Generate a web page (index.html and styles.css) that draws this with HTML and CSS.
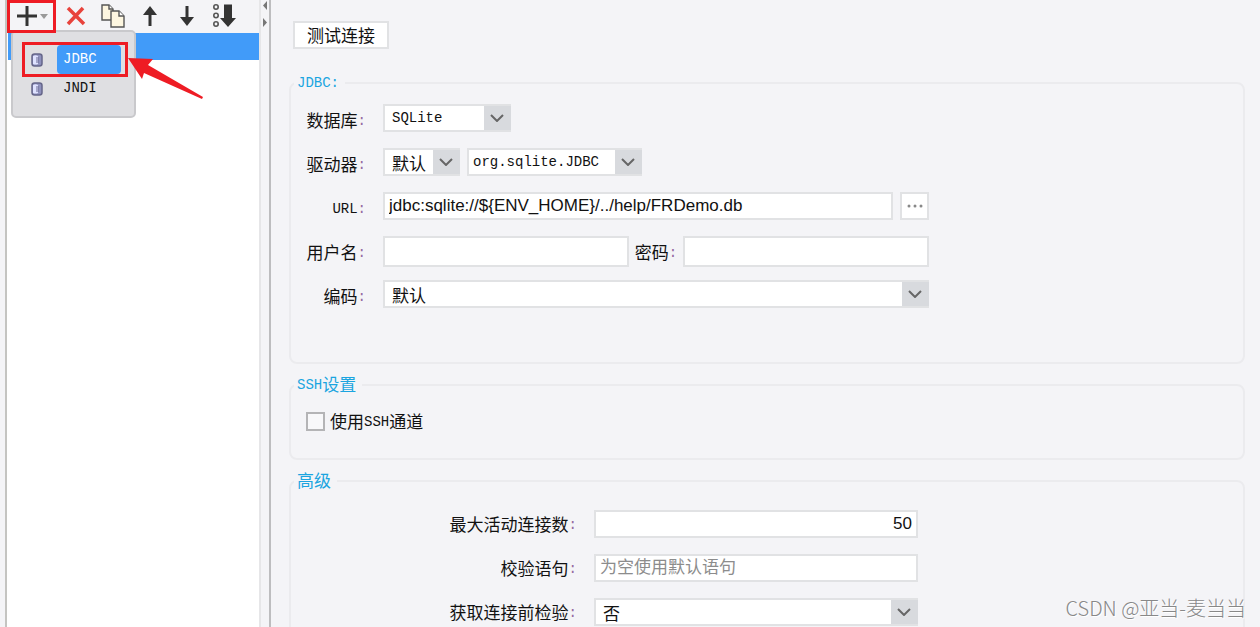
FILE: index.html
```html
<!DOCTYPE html>
<html lang="zh-CN">
<head>
    <meta charset="UTF-8">
    <meta name="viewport" content="width=device-width, initial-scale=1.0">
    <title>定义数据连接</title>
    <link rel="stylesheet" href="styles.css">
</head>

<body>
    <div class="app">
        <aside class="sidebar">
            <div class="toolbar">
                <button class="tool tool-add" type="button" aria-label="新增">
                    <svg width="32" height="20" viewBox="0 0 32 20"><path d="M11 0v20M1 10h20" stroke="#333" stroke-width="3" fill="none"/><path d="M24 8h8l-4 5z" fill="#999"/></svg>
                </button>
                <button class="tool" type="button" aria-label="删除">
                    <svg width="20" height="20" viewBox="0 0 20 20"><path d="M2 2l16 16M17 2L2 18" stroke="#e8433c" stroke-width="3.500" fill="none"/></svg>
                </button>
                <button class="tool" type="button" aria-label="复制">
                    <svg width="24" height="24" viewBox="0 0 24 24" fill="#fdf6e0" stroke="#555" stroke-width="1.400"><path d="M1 1h7l4 4v11H1z"/><path d="M8 1v4h4" fill="#fff"/><path d="M10 7h8l5 5v11H10z"/><path d="M18 7v5h5" fill="#fff"/></svg>
                </button>
                <button class="tool" type="button" aria-label="上移">
                    <svg width="16" height="20" viewBox="0 0 16 20"><path d="M8 20V6" stroke="#333" stroke-width="3"/><path d="M8 0l7 9H1z" fill="#333"/></svg>
                </button>
                <button class="tool" type="button" aria-label="下移">
                    <svg width="16" height="20" viewBox="0 0 16 20"><path d="M8 0v14" stroke="#333" stroke-width="3"/><path d="M8 20l7-9H1z" fill="#333"/></svg>
                </button>
                <button class="tool" type="button" aria-label="排序">
                    <svg width="24" height="24" viewBox="0 0 24 24"><g fill="none" stroke="#555" stroke-width="1.600"><circle cx="4" cy="3" r="2.200"/><circle cx="4" cy="11.500" r="2.200"/><circle cx="4" cy="20" r="2.200"/></g><path d="M12 .5h8V14h4l-8 9-8-9h4z" fill="#333"/></svg>
                </button>
            </div>
            <div class="list">
                <div class="list-row selected"></div>
            </div>

            <div class="menu" role="menu">
                <button class="menu-item" type="button" role="menuitem">
                    <svg width="12" height="14" viewBox="0 0 12 14"><rect x="1" y="1" width="10" height="12" rx="2.500" fill="#8f91bd" stroke="#66668a" stroke-width="1.500"/><path d="M2 3q2.500-1.500 5 0v8q-2.500 1-5 0z" fill="#dfe2ff"/><path d="M5 5h3M5 7h3M5 9h3" stroke="#6c6c96"/></svg>
                    <span class="menu-text active">JDBC</span>
                </button>
                <button class="menu-item" type="button" role="menuitem">
                    <svg width="12" height="14" viewBox="0 0 12 14"><rect x="1" y="1" width="10" height="12" rx="2.500" fill="#8f91bd" stroke="#66668a" stroke-width="1.500"/><path d="M2 3q2.500-1.500 5 0v8q-2.500 1-5 0z" fill="#dfe2ff"/><path d="M5 5h3M5 7h3M5 9h3" stroke="#6c6c96"/></svg>
                    <span class="menu-text">JNDI</span>
                </button>
            </div>
        </aside>

        <div class="splitter">
            <svg width="6" height="28" viewBox="0 0 6 28"><path d="M5 1v9L1 5.500zM1 18v9l4-4.500z" fill="#777"/></svg>
        </div>

        <main class="panel">
            <button class="test-btn" type="button">测试连接</button>

            <fieldset class="group">
                <legend><span class="latin">JDBC:</span></legend>
                <div class="form">
                    <label for="database">数据库<span class="colon">:</span></label>
                    <div class="fields">
                        <div class="select w-db">
                            <select id="database" class="latin"><option>SQLite</option></select>
                            <svg viewBox="0 0 14 8"><path d="M1 1l6 6 6-6"/></svg>
                        </div>
                    </div>

                    <label for="driverType">驱动器<span class="colon">:</span></label>
                    <div class="fields">
                        <div class="select w-type">
                            <select id="driverType"><option>默认</option></select>
                            <svg viewBox="0 0 14 8"><path d="M1 1l6 6 6-6"/></svg>
                        </div>
                        <div class="select w-driver">
                            <select class="latin tight" aria-label="驱动器类名"><option>org.sqlite.JDBC</option></select>
                            <svg viewBox="0 0 14 8"><path d="M1 1l6 6 6-6"/></svg>
                        </div>
                    </div>

                    <label for="url"><span class="latin">URL</span><span class="colon">:</span></label>
                    <div class="fields">
                        <input id="url" type="text" value="jdbc:sqlite://${ENV_HOME}/../help/FRDemo.db">
                        <button class="more-btn" type="button" aria-label="更多">
                            <svg width="16" height="4" viewBox="0 0 16 4" fill="#888"><circle cx="2" cy="2" r="1.500"/><circle cx="8" cy="2" r="1.500"/><circle cx="14" cy="2" r="1.500"/></svg>
                        </button>
                    </div>

                    <label for="user">用户名<span class="colon">:</span></label>
                    <div class="fields account">
                        <input id="user" type="text">
                        <label for="password">密码<span class="colon">:</span></label>
                        <input id="password" type="password">
                    </div>

                    <label for="charset">编码<span class="colon">:</span></label>
                    <div class="fields">
                        <div class="select">
                            <select id="charset"><option>默认</option></select>
                            <svg viewBox="0 0 14 8"><path d="M1 1l6 6 6-6"/></svg>
                        </div>
                    </div>
                </div>
            </fieldset>

            <fieldset class="group">
                <legend><span class="latin">SSH</span>设置</legend>
                <label class="check">
                    <input type="checkbox">
                    <span>使用<span class="latin">SSH</span>通道</span>
                </label>
            </fieldset>

            <fieldset class="group">
                <legend>高级</legend>
                <div class="form advanced">
                    <label for="maxActive">最大活动连接数<span class="colon">:</span></label>
                    <input id="maxActive" class="number" type="text" value="50">

                    <label for="validation">校验语句<span class="colon">:</span></label>
                    <input id="validation" type="text" placeholder="为空使用默认语句">

                    <label for="testOnBorrow">获取连接前检验<span class="colon">:</span></label>
                    <div class="select">
                        <select id="testOnBorrow"><option>否</option></select>
                        <svg viewBox="0 0 14 8"><path d="M1 1l6 6 6-6"/></svg>
                    </div>
                </div>
            </fieldset>
        </main>

        <!-- 标注 -->
        <div class="mark mark-add"></div>
        <div class="mark mark-jdbc"></div>
        <svg class="mark-arrow" width="76" height="44" viewBox="0 0 76 44"><path d="M0 3l25 1-5 6 55 32-1 2-58-26-2 6z" fill="#ee1c24"/></svg>
        <div class="watermark">CSDN @亚当-麦当当</div>
    </div>
</body>
</html>
```

FILE: styles.css
```css
* {
    box-sizing: border-box;
}

body {
    margin: 0;
    background: #f4f4f7;
    color: #111;
    font-family: "Noto Sans CJK SC", sans-serif;
    font-size: 17px;
}

button,
input,
select {
    margin: 0;
    padding: 0;
    border: 2px solid #e1e2e4;
    border-radius: 0;
    background: #fff;
    color: inherit;
    font: inherit;
}

svg {
    display: block;
}

.app {
    position: relative;
    display: flex;
    height: 100vh;
    overflow: hidden;
}

.latin,
.colon,
.menu-text {
    font-family: "Liberation Mono", monospace;
    font-size: 14px;
}

.latin,
.colon {
    vertical-align: 2px;
}

.colon {
    color: #9468a0;
}

/* 左侧 */
.sidebar {
    position: relative;
    display: flex;
    flex-direction: column;
    flex: none;
    width: 256px;
    margin-left: 5px;
    border-left: 2px solid #c4c4c1;
    border-right: 2px solid #e6e6e8;
}

.toolbar {
    display: flex;
    height: 33px;
}

.tool {
    display: flex;
    justify-content: center;
    align-items: center;
    width: 37px;
    height: 31px;
    border: none;
    background: none;
}

.tool-add {
    width: 50px;
}

.list {
    flex: 1;
    padding-left: 1px;
    background: #fff;
}

.list-row {
    height: 27px;
}

.list-row.selected {
    background: #419bf9;
}

.menu {
    position: absolute;
    top: 30px;
    left: 4px;
    width: 125px;
    padding: 13px 0;
    border: 2px solid #c9c9cc;
    border-radius: 5px;
    background: #dfdfe2;
}

.menu-item {
    display: flex;
    align-items: center;
    gap: 14px;
    width: 100%;
    height: 29px;
    padding-left: 18px;
    border: none;
    background: none;
    text-align: left;
}

.menu-text {
    width: 64px;
    padding-left: 6px;
    border-radius: 4px;
    line-height: 29px;
}

.menu-text.active {
    background: #419bf9;
    color: #fff;
}

.splitter {
    flex: none;
    width: 10px;
    padding-left: 1px;
    border-right: 2px solid #bdbdbf;
}

/* 右侧 */
.panel {
    flex: 1;
    min-width: 0;
    padding: 21px 15px 0 18px;
}

.test-btn {
    display: block;
    height: 28px;
    margin: 0 0 24px 4px;
    padding: 0 12px;
    line-height: 24px;
}

.group {
    min-width: 0;
    margin: 0 0 11px;
    padding: 0;
    border: 2px solid #ebebee;
    border-radius: 8px;
}

legend {
    height: 20px;
    margin-left: 3px;
    padding: 0 6px 0 3px;
    color: #1ba5e0;
    line-height: 18px;
}

.form {
    display: grid;
    grid-template-columns: 60px minmax(0, 546px);
    grid-auto-rows: 44px;
    align-items: start;
    column-gap: 17px;
    padding: 11px 15px 38px;
}

.form label {
    line-height: 32px;
    text-align: right;
    white-space: nowrap;
}

.fields {
    display: flex;
    gap: 7px;
}

.form input {
    flex: 1;
    min-width: 0;
    height: 28px;
    padding: 0 4px;
    font-family: "Liberation Sans", "Noto Sans CJK SC", sans-serif;
    font-size: 17px;
}

.form input::placeholder {
    color: #8c8c8c;
}

.fields.account {
    gap: 6px;
}

.form .account input {
    height: 31px;
}

.select {
    position: relative;
    width: 100%;
    height: 28px;
}

.select select {
    display: block;
    width: 100%;
    height: 28px;
    padding: 0 27px 2px 7px;
    border-right: none;
    appearance: none;
    background: linear-gradient(#d8dade, #d8dade) right / 27px 100% no-repeat border-box, #fff;
}

.select select.latin {
    padding-bottom: 0;
}

.select select.tight {
    padding-left: 4px;
}

.select svg {
    position: absolute;
    top: 10px;
    right: 7px;
    width: 14px;
    height: 8px;
    fill: none;
    stroke: #666;
    stroke-width: 2;
    pointer-events: none;
}

.w-db {
    width: 128px;
}

.w-type {
    width: 77px;
}

.w-driver {
    width: 175px;
}

.more-btn {
    display: flex;
    justify-content: center;
    align-items: center;
    width: 29px;
    height: 28px;
}

.check {
    display: flex;
    align-items: center;
    gap: 5px;
    padding: 14px 15px 24px;
    line-height: 24px;
}

.check input {
    width: 19px;
    height: 19px;
    border: 2px solid #b4b4b6;
    background: #f8f8fa;
    appearance: none;
}

.check input:checked {
    background: #419bf9;
}

.form.advanced {
    grid-template-columns: 271px minmax(0, 324px);
    padding-top: 19px;
}

.advanced label {
    line-height: 28px;
}

.form .number {
    text-align: right;
}

/* 标注 */
.mark {
    position: absolute;
    border: 3px solid #ee1c24;
    pointer-events: none;
}

.mark-add {
    top: 0;
    left: 7px;
    width: 49px;
    height: 33px;
}

.mark-jdbc {
    top: 42px;
    left: 22px;
    width: 106px;
    height: 35px;
}

.mark-arrow {
    position: absolute;
    top: 55px;
    left: 128px;
    pointer-events: none;
}

.watermark {
    position: absolute;
    right: 14px;
    bottom: 4px;
    color: #888;
    font-family: "Noto Sans CJK SC", sans-serif;
    font-size: 20px;
    font-weight: 300;
    line-height: 30px;
    text-shadow: 1px 1px 0 #fff;
}
```
